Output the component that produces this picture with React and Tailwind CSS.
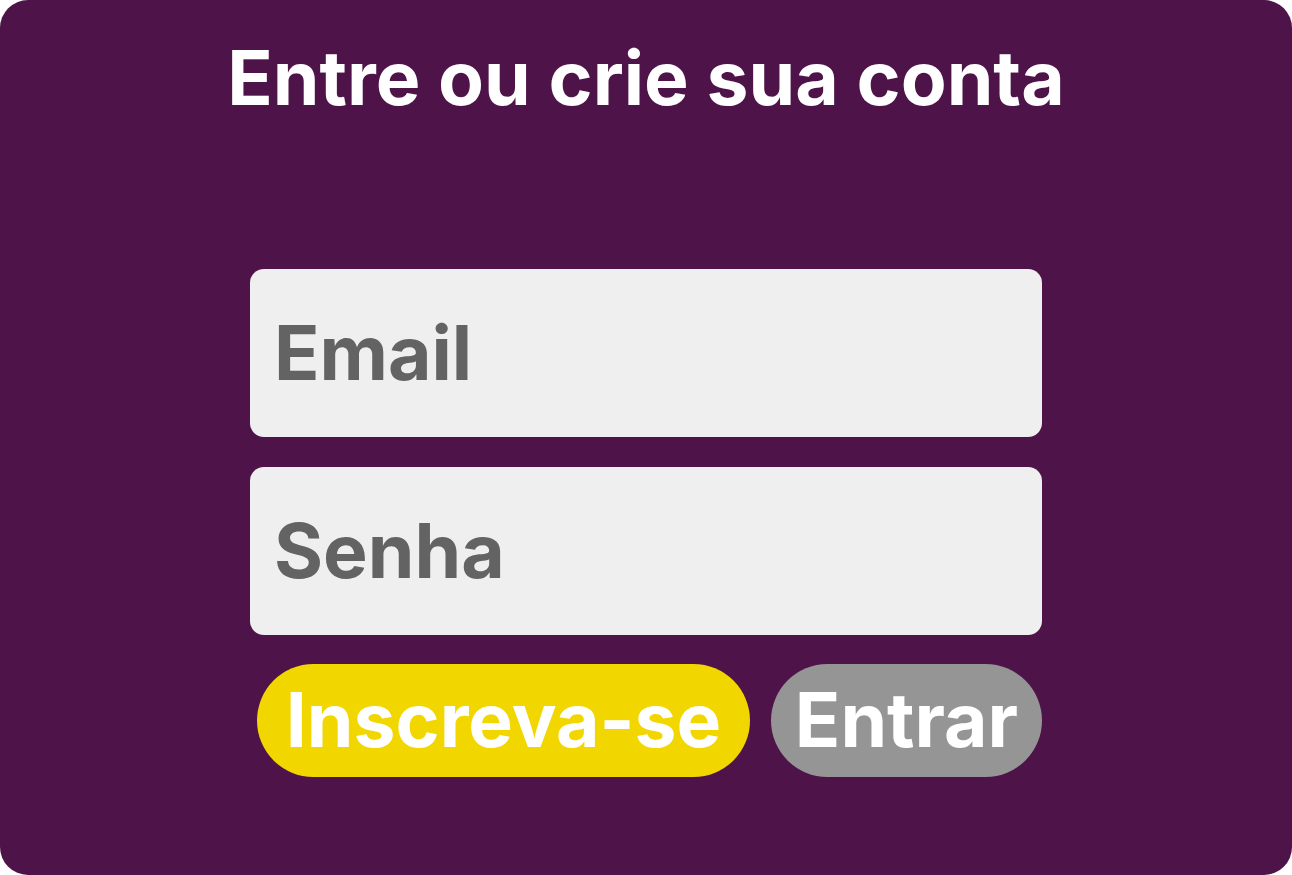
import React from 'react';

export default function App() {
  return (
    <div className="w-[1292px] h-[875px] bg-[#4e1449] rounded-[28px] flex flex-col items-center font-['Inter',sans-serif]">
      <h1 className="mt-[40px] text-[75px] leading-[75px] font-bold text-white">Entre ou crie sua conta</h1>

      <form className="mt-[154px] w-[792px] flex flex-col">
        <div className="h-[168px] bg-[#efefef] rounded-[14px] flex items-center px-[24px]">
          <span className="text-[75px] font-bold text-[#636363]">Email</span>
        </div>
        <div className="mt-[30px] h-[168px] bg-[#efefef] rounded-[14px] flex items-center px-[24px]">
          <span className="text-[75px] font-bold text-[#636363]">Senha</span>
        </div>
        <div className="mt-[29px] flex justify-end gap-[21px]">
          <button type="button" className="w-[493px] h-[113px] rounded-full bg-[#f2d600] text-white text-[75px] font-bold flex items-center justify-center">
            Inscreva-se
          </button>
          <button type="button" className="w-[271px] h-[113px] rounded-full bg-[#959595] text-white text-[75px] font-bold flex items-center justify-center">
            Entrar
          </button>
        </div>
      </form>
    </div>
  );
}
